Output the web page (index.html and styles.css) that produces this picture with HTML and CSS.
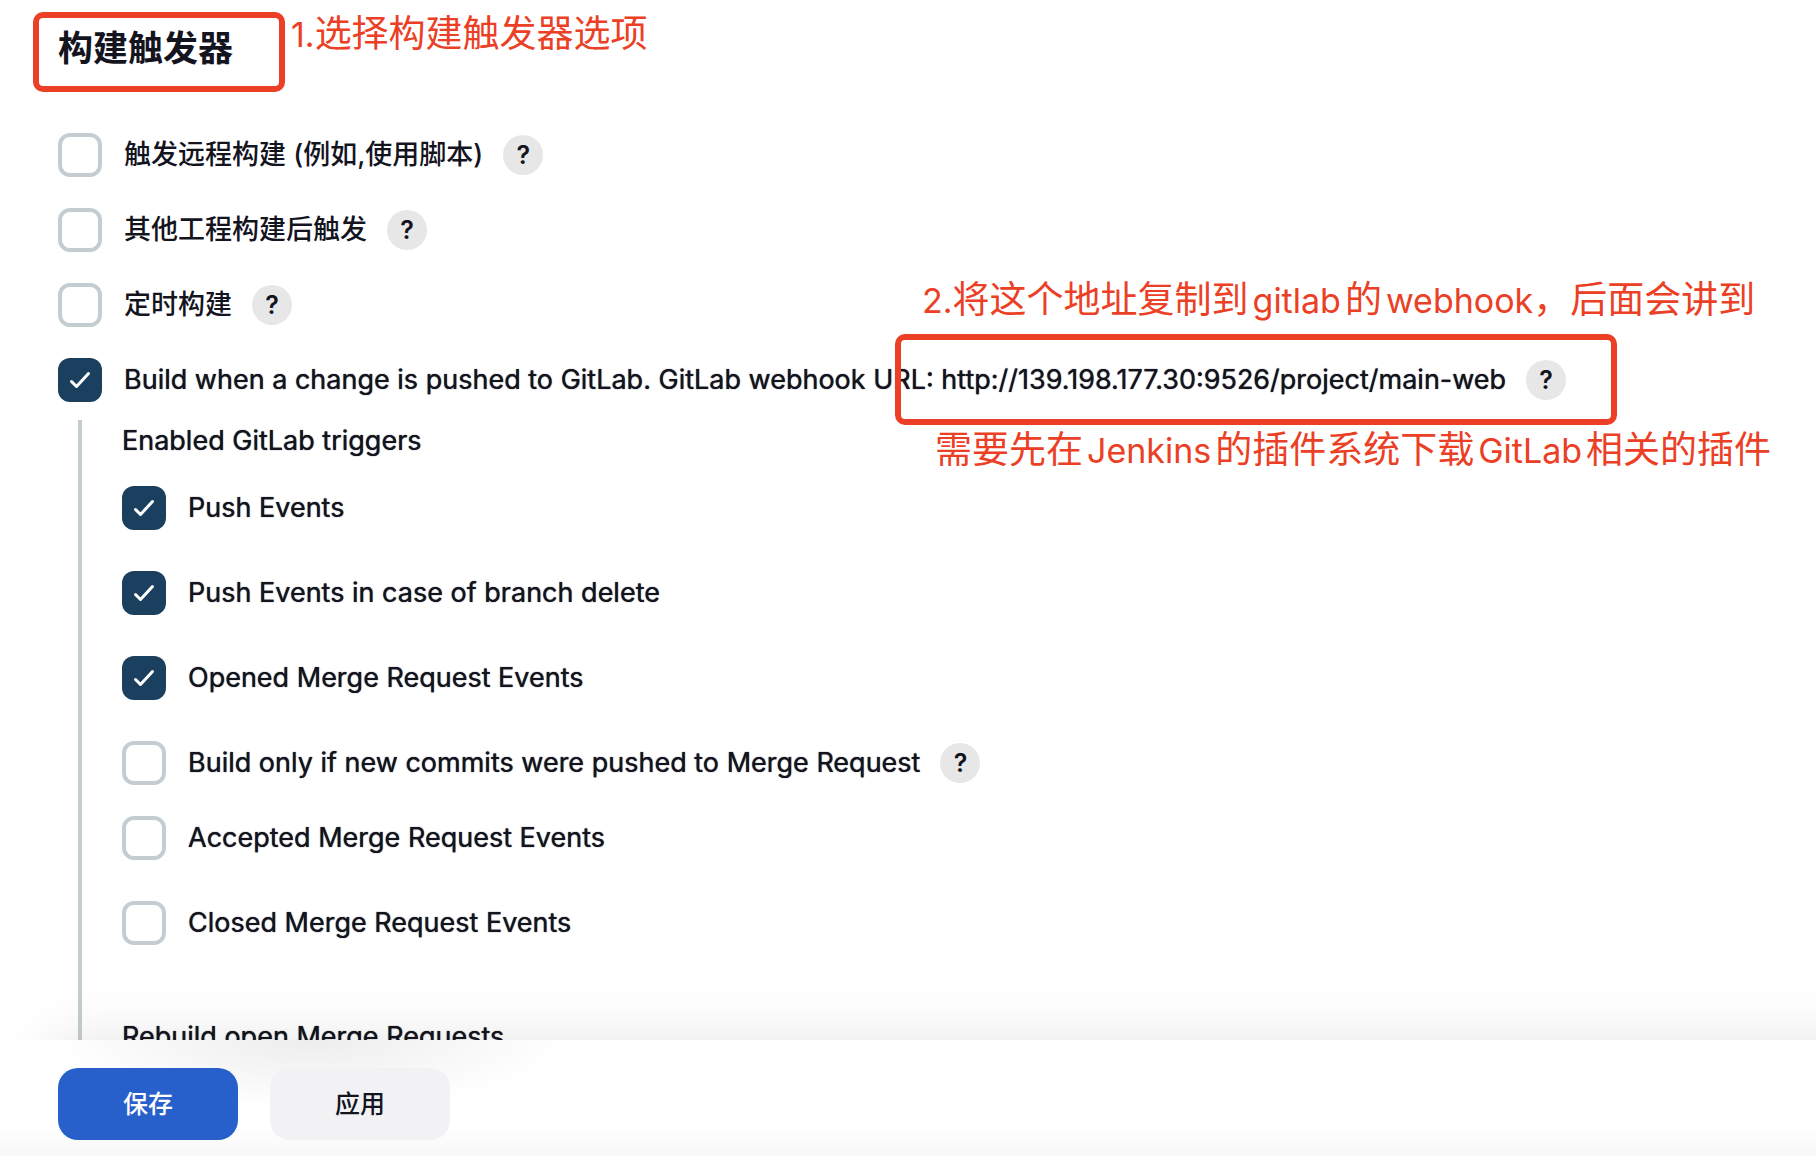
FILE: index.html
```html
<!DOCTYPE html>
<html lang="zh-CN">
<head>
  <meta charset="UTF-8">
  <meta name="viewport" content="width=device-width, initial-scale=1.0">
  <title>构建触发器</title>
  <link rel="stylesheet" href="styles.css">
</head>
<body>

  <main class="config">
    <div class="section-head">
      <h1 class="mark">构建触发器</h1>
      <span class="note"><span class="num">1.</span>选择构建触发器选项</span>
    </div>

    <!-- 触发器列表 -->
    <div class="triggers">
      <div class="row">
        <label class="zh"><input type="checkbox">触发远程构建 (例如,使用脚本)</label>
        <button type="button" class="help">?</button>
      </div>
      <div class="row">
        <label class="zh"><input type="checkbox">其他工程构建后触发</label>
        <button type="button" class="help">?</button>
      </div>
      <div class="row">
        <label class="zh"><input type="checkbox">定时构建</label>
        <button type="button" class="help">?</button>
      </div>
      <div class="row webhook">
        <label><input type="checkbox" checked>Build when a change is pushed to GitLab. GitLab webhook URL: http://139.198.177.30:9526/project/main-web</label>
        <button type="button" class="help">?</button>
        <span class="url-mark"></span>
        <span class="note note-top"><span class="num">2.</span>将这个地址复制到<span class="en">gitlab</span>的<span class="en last">webhook</span>，后面会讲到</span>
        <span class="note note-bottom">需要先在<span class="en">Jenkins</span>的插件系统下载<span class="en">GitLab</span>相关的插件</span>
      </div>
    </div>

    <!-- GitLab 选项 -->
    <div class="nested">
      <div class="nested-title">Enabled GitLab triggers</div>
      <div class="row tall"><label><input type="checkbox" checked>Push Events</label></div>
      <div class="row tall"><label><input type="checkbox" checked>Push Events in case of branch delete</label></div>
      <div class="row tall"><label><input type="checkbox" checked>Opened Merge Request Events</label></div>
      <div class="row">
        <label><input type="checkbox">Build only if new commits were pushed to Merge Request</label>
        <button type="button" class="help">?</button>
      </div>
      <div class="row tall"><label><input type="checkbox">Accepted Merge Request Events</label></div>
      <div class="row tall"><label><input type="checkbox">Closed Merge Request Events</label></div>
      <div class="nested-title rebuild">Rebuild open Merge Requests</div>
    </div>
  </main>

  <footer class="bottom-bar">
    <button type="submit" class="btn primary">保存</button>
    <button type="button" class="btn">应用</button>
  </footer>

</body>
</html>
```

FILE: styles.css
```css
* {
  box-sizing: border-box;
}

body {
  display: flex;
  flex-direction: column;
  height: 100vh;
  margin: 0;
  overflow: hidden;
  background: #fff;
  color: #14141f;
  font-family: Inter, "Noto Sans CJK SC", sans-serif;
  font-size: 27px;
  font-weight: 400;
  line-height: 32px;
}

.config {
  position: relative;
  flex: 1;
  min-height: 0;
  padding: 12px 0 0 58px;
  overflow: hidden;
}

/* soft shadow above the bottom bar */
.config::after {
  content: "";
  position: absolute;
  left: 50px;
  right: -100px;
  bottom: -100px;
  height: 100px;
  box-shadow: 0 0 60px rgba(0, 0, 0, 0.1);
}

.section-head {
  display: flex;
  align-items: flex-start;
  gap: 6px;
  margin: 0 0 41px -25px;
}

.mark {
  width: 252px;
  height: 80px;
  margin: 0;
  padding: 5px 0 0 19px;
  border: 6px solid #eb4025;
  border-radius: 10px;
  font-size: 35px;
  font-weight: 700;
  line-height: 50px;
}

.note {
  color: #eb4025;
  font-size: 37px;
  font-weight: 400;
  line-height: 44px;
  white-space: nowrap;
}

.note .num,
.note .en {
  font-size: 34px;
}

.note .en {
  margin: 0 4px;
}

.note .last {
  margin-right: 0;
}

.row {
  display: flex;
  align-items: flex-start;
  gap: 20px;
  height: 75px;
}

.row.tall {
  height: 85px;
}

.row label {
  display: flex;
  align-items: center;
  gap: 22px;
  height: 44px;
  white-space: nowrap;
}

/* a touch heavier than regular */
.row label,
.nested-title {
  text-shadow: 0 0 1px #14141f;
}

.row .zh {
  font-weight: 500;
  text-shadow: none;
}

input[type="checkbox"] {
  appearance: none;
  width: 44px;
  height: 44px;
  margin: 0;
  border: 4px solid #c4cdd1;
  border-radius: 12px;
  background: #fff;
}

input[type="checkbox"]:checked {
  border: none;
  background: #1b3f5e url("data:image/svg+xml,%3Csvg xmlns='http://www.w3.org/2000/svg' width='44' height='44' fill='none' stroke='white' stroke-width='3' stroke-linecap='round' stroke-linejoin='round'%3E%3Cpath d='M13.5 23.5L18.5 28.5L30.5 15.5'/%3E%3C/svg%3E");
}

.help {
  width: 40px;
  height: 40px;
  margin-top: 2px;
  padding: 0;
  border: none;
  border-radius: 50%;
  background: #e7e7e7;
  color: #14141f;
  font: 600 25px/40px Inter, sans-serif;
}

/* callout around the webhook address */
.webhook {
  position: relative;
}

.url-mark {
  position: absolute;
  top: -24px;
  left: 837px;
  width: 722px;
  height: 91px;
  border: 6px solid #eb4025;
  border-radius: 10px;
}

.note-top,
.note-bottom {
  position: absolute;
}

.note-top {
  top: -80px;
  left: 864px;
}

.note-bottom {
  top: 70px;
  left: 877px;
}

.nested {
  position: relative;
  margin: -13px 0 0 20px;
  padding-left: 40px;
  border-left: 4px solid #c4cdd1;
}

.nested-title {
  padding: 5px 0 29px;
}

.rebuild {
  padding-top: 35px;
}

.bottom-bar {
  display: flex;
  gap: 32px;
  height: 116px;
  padding: 28px 58px 0;
  background:
    radial-gradient(260px 70px at 310px 0, rgba(0, 0, 0, 0.07), transparent),
    linear-gradient(transparent 75%, rgba(0, 0, 0, 0.03));
}

.btn {
  width: 180px;
  height: 72px;
  padding: 0 0 4px;
  border: none;
  border-radius: 20px;
  background: #f2f2f5;
  color: #14141f;
  font-family: inherit;
  font-size: 25px;
  font-weight: 500;
}

.btn.primary {
  background: #2860cb;
  color: #fff;
}
```
